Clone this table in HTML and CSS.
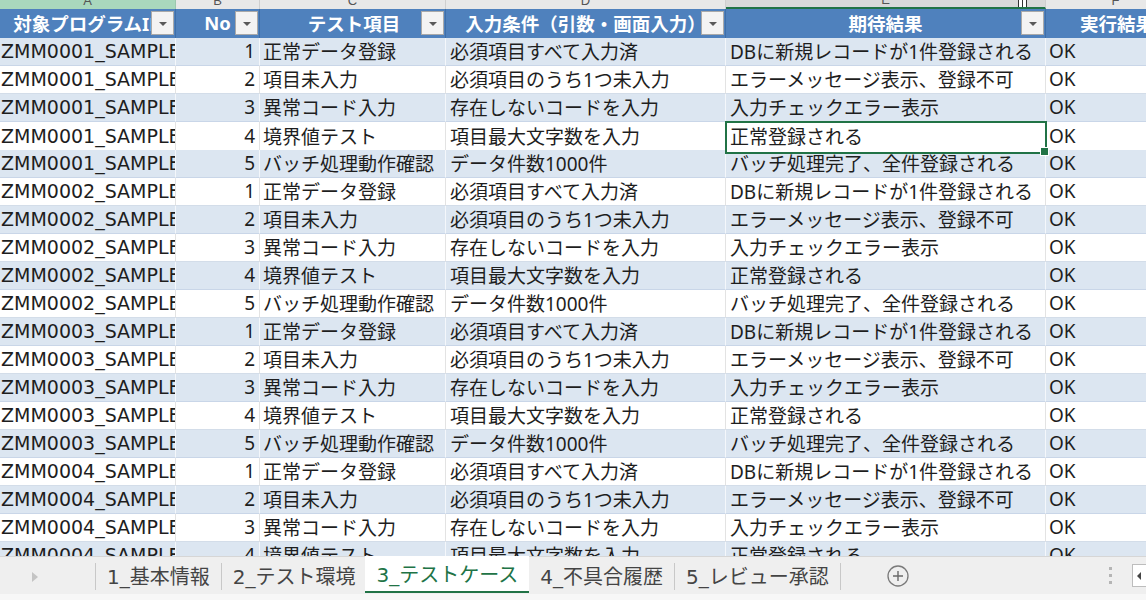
FILE: index.html
```html
<!DOCTYPE html>
<html lang="ja">
<head>
<meta charset="utf-8">
<title>3_テストケース</title>
<link rel="stylesheet" href="styles.css">
</head>
<body>
<div class="app">
  <div class="sheet">
    <div class="cols">
      <div class="colhead colsel"><span>A</span></div>
      <div class="colhead"><span>B</span></div>
      <div class="colhead"><span>C</span></div>
      <div class="colhead"><span>D</span></div>
      <div class="colhead colactive"><span>E</span><i class="cursor"></i></div>
      <div class="colhead"><span>F</span></div>
    </div>
    <div class="row head">
      <div class="cell"><span class="htxt">対象プログラムID</span><b class="filter"></b></div>
      <div class="cell"><span class="htxt">No</span><b class="filter"></b></div>
      <div class="cell"><span class="htxt">テスト項目</span><b class="filter"></b></div>
      <div class="cell"><span class="htxt">入力条件（引数・画面入力）</span><b class="filter"></b></div>
      <div class="cell"><span class="htxt">期待結果</span><b class="filter"></b></div>
      <div class="cell"><span class="htxt">実行結果</span></div>
    </div>

    <div class="row alt"><div class="cell">ZMM0001_SAMPLE</div><div class="cell num">1</div><div class="cell">正常データ登録</div><div class="cell">必須項目すべて入力済</div><div class="cell">DBに新規レコードが1件登録される</div><div class="cell">OK</div></div>
    <div class="row"><div class="cell">ZMM0001_SAMPLE</div><div class="cell num">2</div><div class="cell">項目未入力</div><div class="cell">必須項目のうち1つ未入力</div><div class="cell">エラーメッセージ表示、登録不可</div><div class="cell">OK</div></div>
    <div class="row alt"><div class="cell">ZMM0001_SAMPLE</div><div class="cell num">3</div><div class="cell">異常コード入力</div><div class="cell">存在しないコードを入力</div><div class="cell">入力チェックエラー表示</div><div class="cell">OK</div></div>
    <div class="row"><div class="cell">ZMM0001_SAMPLE</div><div class="cell num">4</div><div class="cell">境界値テスト</div><div class="cell">項目最大文字数を入力</div><div class="cell sel">正常登録される</div><div class="cell">OK</div></div>
    <div class="row alt"><div class="cell">ZMM0001_SAMPLE</div><div class="cell num">5</div><div class="cell">バッチ処理動作確認</div><div class="cell">データ件数1000件</div><div class="cell">バッチ処理完了、全件登録される</div><div class="cell">OK</div></div>

    <div class="row"><div class="cell">ZMM0002_SAMPLE</div><div class="cell num">1</div><div class="cell">正常データ登録</div><div class="cell">必須項目すべて入力済</div><div class="cell">DBに新規レコードが1件登録される</div><div class="cell">OK</div></div>
    <div class="row alt"><div class="cell">ZMM0002_SAMPLE</div><div class="cell num">2</div><div class="cell">項目未入力</div><div class="cell">必須項目のうち1つ未入力</div><div class="cell">エラーメッセージ表示、登録不可</div><div class="cell">OK</div></div>
    <div class="row"><div class="cell">ZMM0002_SAMPLE</div><div class="cell num">3</div><div class="cell">異常コード入力</div><div class="cell">存在しないコードを入力</div><div class="cell">入力チェックエラー表示</div><div class="cell">OK</div></div>
    <div class="row alt"><div class="cell">ZMM0002_SAMPLE</div><div class="cell num">4</div><div class="cell">境界値テスト</div><div class="cell">項目最大文字数を入力</div><div class="cell">正常登録される</div><div class="cell">OK</div></div>
    <div class="row"><div class="cell">ZMM0002_SAMPLE</div><div class="cell num">5</div><div class="cell">バッチ処理動作確認</div><div class="cell">データ件数1000件</div><div class="cell">バッチ処理完了、全件登録される</div><div class="cell">OK</div></div>

    <div class="row alt"><div class="cell">ZMM0003_SAMPLE</div><div class="cell num">1</div><div class="cell">正常データ登録</div><div class="cell">必須項目すべて入力済</div><div class="cell">DBに新規レコードが1件登録される</div><div class="cell">OK</div></div>
    <div class="row"><div class="cell">ZMM0003_SAMPLE</div><div class="cell num">2</div><div class="cell">項目未入力</div><div class="cell">必須項目のうち1つ未入力</div><div class="cell">エラーメッセージ表示、登録不可</div><div class="cell">OK</div></div>
    <div class="row alt"><div class="cell">ZMM0003_SAMPLE</div><div class="cell num">3</div><div class="cell">異常コード入力</div><div class="cell">存在しないコードを入力</div><div class="cell">入力チェックエラー表示</div><div class="cell">OK</div></div>
    <div class="row"><div class="cell">ZMM0003_SAMPLE</div><div class="cell num">4</div><div class="cell">境界値テスト</div><div class="cell">項目最大文字数を入力</div><div class="cell">正常登録される</div><div class="cell">OK</div></div>
    <div class="row alt"><div class="cell">ZMM0003_SAMPLE</div><div class="cell num">5</div><div class="cell">バッチ処理動作確認</div><div class="cell">データ件数1000件</div><div class="cell">バッチ処理完了、全件登録される</div><div class="cell">OK</div></div>

    <div class="row"><div class="cell">ZMM0004_SAMPLE</div><div class="cell num">1</div><div class="cell">正常データ登録</div><div class="cell">必須項目すべて入力済</div><div class="cell">DBに新規レコードが1件登録される</div><div class="cell">OK</div></div>
    <div class="row alt"><div class="cell">ZMM0004_SAMPLE</div><div class="cell num">2</div><div class="cell">項目未入力</div><div class="cell">必須項目のうち1つ未入力</div><div class="cell">エラーメッセージ表示、登録不可</div><div class="cell">OK</div></div>
    <div class="row"><div class="cell">ZMM0004_SAMPLE</div><div class="cell num">3</div><div class="cell">異常コード入力</div><div class="cell">存在しないコードを入力</div><div class="cell">入力チェックエラー表示</div><div class="cell">OK</div></div>
    <div class="row alt"><div class="cell">ZMM0004_SAMPLE</div><div class="cell num">4</div><div class="cell">境界値テスト</div><div class="cell">項目最大文字数を入力</div><div class="cell">正常登録される</div><div class="cell">OK</div></div>
  </div>

  <div class="tabbar">
    <div class="nav">
      <svg width="10" height="12" viewBox="0 0 10 12"><path d="M2 1 L8 6 L2 11 Z" fill="#c4c4c4"/></svg>
    </div>
    <div class="tab">1_基本情報</div>
    <div class="tab">2_テスト環境</div>
    <div class="tab active">3_テストケース</div>
    <div class="tab">4_不具合履歴</div>
    <div class="tab last">5_レビュー承認</div>
    <div class="add">
      <svg width="24" height="24" viewBox="0 0 24 24"><circle cx="12" cy="12" r="10" fill="none" stroke="#7a7a7a" stroke-width="1.3"/><path d="M12 7 V17 M7 12 H17" stroke="#6a6a6a" stroke-width="1.4"/></svg>
    </div>
    <div class="spacer"></div>
    <div class="dots"><i></i><i></i><i></i></div>
    <div class="hscroll"><svg width="10" height="12" viewBox="0 0 10 12"><path d="M7 2 L3 6 L7 10 Z" fill="#444"/></svg></div>
  </div>
  <div class="strip"></div>
</div>
</body>
</html>
```

FILE: styles.css
```css
* { box-sizing: border-box; }
html, body { margin: 0; padding: 0; background: #ffffff; }
body {
  font-family: "Noto Sans", "Noto Sans CJK JP", sans-serif;
  color: #1e1e1e;
}
.app {
  width: 1146px;
  height: 600px;
  overflow: hidden;
  display: flex;
  flex-direction: column;
}
.sheet {
  flex: 1;
  overflow: hidden;
  min-height: 0;
}
.cols, .row {
  display: grid;
  grid-template-columns: 176px 84px 186px 280px 320px 140px;
  width: 1186px;
}
.cols { height: 9px; background: #e8e8e8; }
.colhead {
  position: relative;
  height: 9px;
  overflow: hidden;
  text-align: center;
  border-right: 1px solid #cfcfcf;
  font-family: "Liberation Sans", sans-serif;
  font-size: 13px;
  color: #555;
}
.colhead span { display: block; line-height: 14px; margin-top: -6px; }
.colsel { background: #a9d8bd; border-right-color: #9cc7ae; }
.colactive { background: #d9d9d9; border-bottom: 2px solid #217346; }
.colactive span { margin-top: -7px; }
.cursor {
  position: absolute;
  left: 292px;
  top: 0;
  width: 9px;
  height: 8px;
  background: #fff;
  border: 1px solid #333;
  border-top: none;
  box-shadow: inset 3px 0 0 #fff, inset 4px 0 0 #333;
}

.row { height: 28px; }
.row.head { height: 29px; background: #4f81bd; }
.cell {
  position: relative;
  display: flex;
  align-items: center;
  overflow: hidden;
  white-space: nowrap;
  font-size: 19px;
  padding: 0 4px 2px 4px;
  border-right: 1px solid #e3e3e3;
  border-bottom: 1px solid #d3dde9;
}
.row .cell:first-child {
  padding-left: 1px;
  font-family: "DejaVu Sans", "Noto Sans CJK JP", sans-serif;
  font-size: 19px;
}
.row.head .cell:first-child { font-family: "Noto Sans", "Noto Sans CJK JP", sans-serif; font-size: 18.5px; }
.row .cell:nth-child(3) { padding-left: 3px; }
.row .cell:nth-child(6) { padding-left: 3px; }
.row.alt .cell { background: #dce6f1; border-right-color: #f4f7fb; border-bottom-color: #c9d6e8; }
.cell.num { justify-content: flex-end; padding-right: 4px; }
.head .cell {
  justify-content: center;
  color: #fff;
  font-weight: 700;
  font-size: 18.5px;
  padding: 0 0 2px 0;
  border-right: 1px solid #3f6fa8;
  border-bottom: none;
}
.head .cell .htxt { white-space: nowrap; }
.filter {
  position: absolute;
  right: 1px;
  top: 2px;
  width: 23px;
  height: 24px;
  background: #f3f3f3;
  border: 1px solid #a9a9a9;
}
.filter::after {
  content: "";
  position: absolute;
  left: 7px;
  top: 10px;
  border-left: 4px solid transparent;
  border-right: 4px solid transparent;
  border-top: 4px solid #595959;
}
.cell.sel {
  z-index: 2;
  overflow: visible;
  background: #fff;
  outline: 2px solid #217346;
  outline-offset: -1px;
}
.cell.sel::after {
  content: "";
  position: absolute;
  right: -4px;
  bottom: -4px;
  width: 7px;
  height: 7px;
  background: #217346;
  border: 1px solid #fff;
}

.tabbar {
  height: 38px;
  flex: none;
  display: flex;
  align-items: stretch;
  background: #efefef;
  border-top: 1px solid #d6d6d6;
  font-family: "DejaVu Sans", "Noto Sans CJK JP", sans-serif;
  font-size: 20px;
  color: #444;
}
.nav {
  width: 96px;
  display: flex;
  align-items: center;
  padding-left: 30px;
  border-right: 1px solid #c8c8c8;
  margin: 6px 0 4px 0;
}
.tab {
  display: flex;
  align-items: center;
  padding: 0 11px 2px 11px;
  margin: 6px 0 4px 0;
  border-right: 1px solid #c8c8c8;
}
.tab.active {
  margin: -1px 0 0 -1px;
  padding: 0 11px 0 11px;
  background: #fff;
  color: #217346;
  border-right: none;
  border-bottom: 2px solid #217346;
  height: 37px;
}
.tab:has(+ .tab.active) { border-right: none; padding-right: 11px; }
.add {
  display: flex;
  align-items: center;
  padding-left: 45px;
}
.spacer { flex: 1; }
.dots {
  display: flex;
  flex-direction: column;
  justify-content: center;
  gap: 4px;
  width: 4px;
  margin-right: 19px;
}
.dots i { display: block; width: 3px; height: 3px; background: #b5b5b5; }
.hscroll {
  width: 14px;
  margin: 7px 0 7px 0;
  background: #fff;
  border: 1px solid #bdbdbd;
  border-right: none;
  display: flex;
  align-items: center;
  padding-left: 1px;
}
.strip { height: 6px; flex: none; background: #f7f7f7; }
```
